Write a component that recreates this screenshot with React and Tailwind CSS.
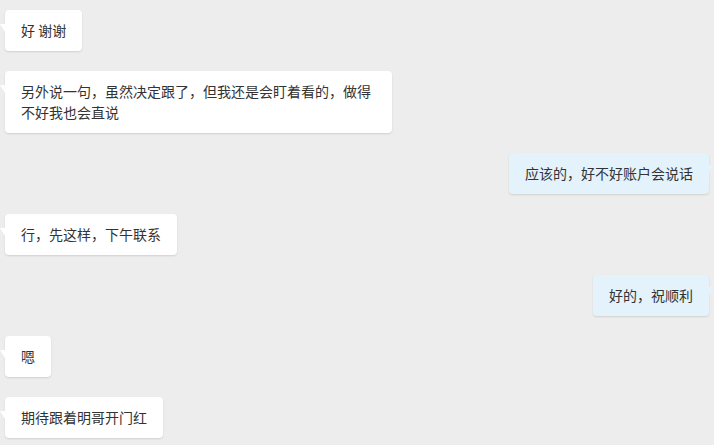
import React from 'react'

const messages = [
  { id: 1, mine: false, text: '好 谢谢' },
  { id: 2, mine: false, text: '另外说一句，虽然决定跟了，但我还是会盯着看的，做得不好我也会直说' },
  { id: 3, mine: true, text: '应该的，好不好账户会说话' },
  { id: 4, mine: false, text: '行，先这样，下午联系' },
  { id: 5, mine: true, text: '好的，祝顺利' },
  { id: 6, mine: false, text: '嗯' },
  { id: 7, mine: false, text: '期待跟着明哥开门红' },
]

function Bubble({ mine, text }) {
  return (
    <div className={`flex ${mine ? 'justify-end' : 'justify-start'}`}>
      <div
        className={`relative max-w-[387px] rounded-[4px] px-4 py-[10px] text-[14px] leading-[21px] text-[#333] shadow-[0_1px_2px_rgba(0,0,0,0.12)] ${mine ? 'bg-[#e4f2fc]' : 'bg-white'}`}
      >
        {mine ? (
          <span className="absolute -right-[5px] top-[12px] h-[8px] w-[5px] bg-[#e4f2fc] [clip-path:polygon(0_0,100%_0,0_100%)]" />
        ) : (
          <span className="absolute -left-[5px] top-[14px] h-[8px] w-[5px] bg-white [clip-path:polygon(0_0,100%_0,100%_100%)]" />
        )}
        {text}
      </div>
    </div>
  )
}

export default function App() {
  return (
    <div
      className="h-[445px] w-[714px] overflow-hidden bg-[#ededed] px-[5px] pt-[10px]"
      style={{ fontFamily: '"Noto Sans CJK SC", "Noto Sans", sans-serif' }}
    >
      <div className="flex flex-col gap-[20px]">
        {messages.map((m) => (
          <Bubble key={m.id} mine={m.mine} text={m.text} />
        ))}
      </div>
    </div>
  )
}
